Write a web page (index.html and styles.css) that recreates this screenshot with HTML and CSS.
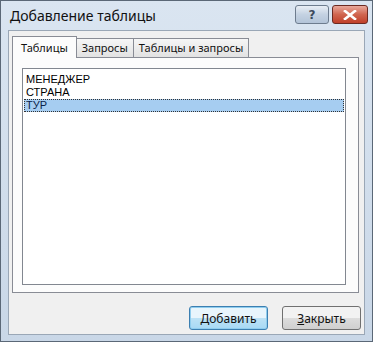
FILE: index.html
```html
<!DOCTYPE html>
<html lang="ru">
<head>
    <meta charset="UTF-8">
    <title>Добавление таблицы</title>
    <link rel="stylesheet" href="styles.css">
</head>
<body>
    <div class="window">
        <div class="titlebar">
            <span class="title">Добавление таблицы</span>
            <div class="caption-buttons">
                <div class="cap-btn help">?</div>
                <div class="cap-btn close">
                    <svg width="14" height="10" viewBox="0 0 14 10">
                        <path d="M2 1 L12 9 M12 1 L2 9" stroke="#fff" stroke-width="2.6" stroke-linecap="square"/>
                    </svg>
                </div>
            </div>
        </div>

        <div class="client">
            <div class="tabs">
                <div class="tab active">Таблицы</div>
                <div class="tab">Запросы</div>
                <div class="tab">Таблицы и запросы</div>
            </div>
            <div class="tab-panel">
                <ul class="listbox">
                    <li>МЕНЕДЖЕР</li>
                    <li>СТРАНА</li>
                    <li class="selected">ТУР</li>
                </ul>
            </div>
            <div class="buttons">
                <button class="btn default"><u>Д</u>обавить</button>
                <button class="btn"><u>З</u>акрыть</button>
            </div>
        </div>
    </div>
</body>
</html>
```

FILE: styles.css
```css
body {
    margin: 0;
    width: 373px;
    height: 342px;
    overflow: hidden;
    font-family: "Noto Sans", "Liberation Sans", sans-serif;
    background: #fff;
}
.window {
    box-sizing: border-box;
    width: 373px;
    height: 342px;
    border: 1px solid #5b6877;
    background: linear-gradient(#dae5f1, #c9d7e7);
    padding: 0 7px 6px 7px;
    display: flex;
    flex-direction: column;
}
.titlebar {
    height: 29px;
    display: flex;
    align-items: flex-start;
    justify-content: space-between;
}
.title {
    margin-top: 5px;
    margin-left: 2px;
    font-size: 14px;
    color: #111;
}
.caption-buttons {
    display: flex;
    gap: 3px;
    margin-top: 4px;
    margin-right: -3px;
}
.cap-btn {
    height: 19px;
    box-sizing: border-box;
    border: 1px solid #6d7c8e;
    border-radius: 3px;
    display: flex;
    align-items: center;
    justify-content: center;
}
.help {
    width: 34px;
    background: linear-gradient(#e8eef5, #c4d2e2 50%, #b3c4d8);
    color: #3c4a5c;
    font-family: "DejaVu Sans", sans-serif;
    font-size: 12px;
    font-weight: bold;
}
.close {
    width: 36px;
    border-color: #6b2a22;
    background: linear-gradient(#e9a99c, #d0654f 50%, #c0402a);
}
.client {
    flex: 1;
    background: #f0f0f0;
    border: 1px solid #9aa7b6;
    padding: 7px 5px 4px 3px;
    display: flex;
    flex-direction: column;
}
.tabs {
    display: flex;
    height: 19px;
    align-items: flex-end;
    position: relative;
    z-index: 1;
}
.tab {
    box-sizing: border-box;
    height: 19px;
    padding: 0 5px;
    font-size: 11px;
    line-height: 17px;
    color: #111;
    border: 1px solid #898c95;
    border-bottom: none;
    margin-left: -1px;
    background: linear-gradient(#f6f6f6, #e2e2e2);
}
.tab.active {
    height: 22px;
    margin-left: 0;
    padding: 0 8px;
    line-height: 21px;
    background: #fcfcfc;
    margin-bottom: -1px;
}
.tab-panel {
    height: 236px;
    box-sizing: border-box;
    background: #fcfcfc;
    border: 1px solid #898c95;
    padding: 10px 12px 7px 9px;
    display: flex;
}
.listbox {
    flex: 1;
    margin: 0;
    padding: 4px 1px 0 1px;
    list-style: none;
    background: #fff;
    border: 1px solid #828790;
    font-family: "Liberation Sans", sans-serif;
    font-size: 11px;
}
.listbox li {
    height: 13px;
    line-height: 13px;
    padding-left: 2px;
    box-sizing: border-box;
    color: #000;
}
.listbox li.selected {
    background: #a6cdf1;
    outline: 1px dotted #333;
    outline-offset: -1px;
    color: #0a1f4a;
}
.buttons {
    margin-top: 13px;
    margin-right: -2px;
    display: flex;
    justify-content: flex-end;
    gap: 14px;
}
.btn {
    width: 79px;
    height: 24px;
    border: 1px solid #707070;
    border-radius: 3px;
    background: linear-gradient(#f2f2f2 50%, #dddddd 50%, #cfcfcf);
    font-family: "Noto Sans", "Liberation Sans", sans-serif;
    font-size: 12px;
    color: #111;
    padding: 0;
}
.btn.default {
    border-color: #3c7fb1;
    background: linear-gradient(#e8f5fc 50%, #bde2f5 50%, #a7d9f5);
    box-shadow: inset 0 0 0 1px #8fcdee;
}
```
